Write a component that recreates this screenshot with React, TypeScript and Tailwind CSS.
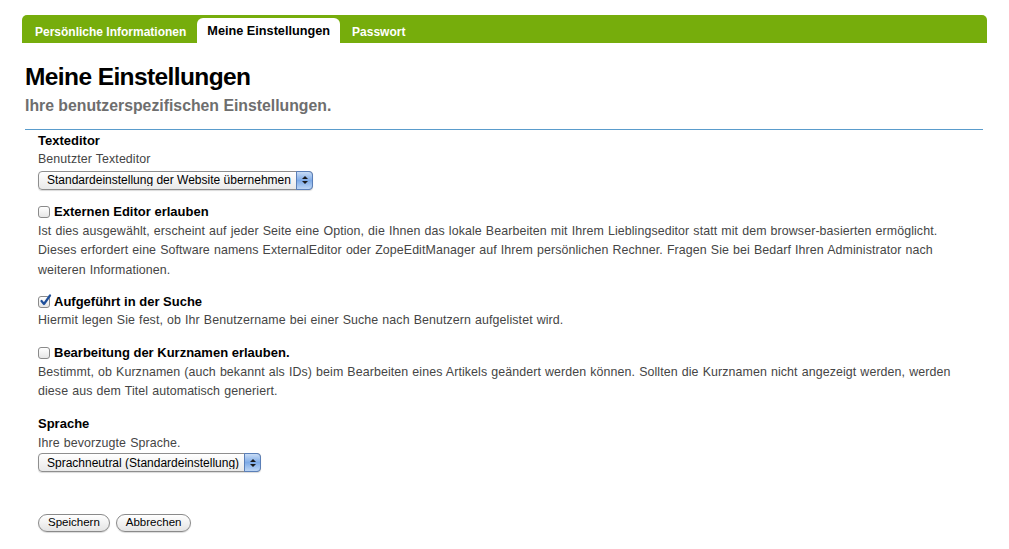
import React from 'react';

const font = { fontFamily: '"Liberation Sans", Arial, sans-serif' };

const tabs = [
  { label: 'Persönliche Informationen', active: false },
  { label: 'Meine Einstellungen', active: true },
  { label: 'Passwort', active: false },
];

const MacSelect = ({ value, width }: { value: string; width: string }) => (
  <div
    className={`flex h-[19px] ${width} items-center rounded-[4px] border border-[#8e8e8e] bg-gradient-to-b from-white to-[#e9e9e9] shadow-[0_1px_1px_rgba(0,0,0,0.15)]`}
  >
    <span className="flex-1 truncate pl-[8px] text-[12px] leading-none text-black">{value}</span>
    <span className="mr-[-1px] flex h-[19px] w-[17px] flex-col items-center justify-center gap-[2px] rounded-r-[4px] border border-[#5a7fb8] bg-gradient-to-b from-[#c8dcf5] via-[#7eaae6] to-[#bcd5f4]">
      <svg width="6" height="3" viewBox="0 0 6 3"><path d="M0 3 L3 0 L6 3 Z" fill="#1a1a1a" /></svg>
      <svg width="6" height="3" viewBox="0 0 6 3"><path d="M0 0 L3 3 L6 0 Z" fill="#1a1a1a" /></svg>
    </span>
  </div>
);

const Checkbox = ({ checked }: { checked?: boolean }) => (
  <span className="relative mr-[4px] inline-flex h-[12px] w-[12px] shrink-0 rounded-[3px] border border-[#8a8a8a] bg-gradient-to-b from-white to-[#e6e6e6]">
    {checked && (
      <svg className="absolute left-[0px] top-[-3px]" width="13" height="13" viewBox="0 0 13 13">
        <path d="M2.5 7 L5 10 L11 1.5" fill="none" stroke="#1f4f9a" strokeWidth="2.2" strokeLinecap="round" strokeLinejoin="round" />
      </svg>
    )}
  </span>
);

const Button = ({ label }: { label: string }) => (
  <button className="h-[18px] rounded-full border border-[#8a8a8a] bg-gradient-to-b from-white to-[#e4e4e4] px-[9px] text-[11.5px] leading-none text-black shadow-[0_1px_1px_rgba(0,0,0,0.15)]">
    {label}
  </button>
);

const Label = ({ children }: { children: React.ReactNode }) => (
  <div className="flex h-[19px] items-center text-[13px] font-bold text-black">{children}</div>
);

const Help = ({ children }: { children: React.ReactNode }) => (
  <div className="whitespace-nowrap text-[12.4px] leading-[19.5px] tracking-[0.1px] text-[#454545] [word-spacing:0.5px]">
    {children}
  </div>
);

export default function App() {
  return (
    <div className="min-h-[549px] w-[1009px] bg-white" style={font}>
      <div className="px-[22px] pt-[15px]">
        <div className="flex h-[28px] items-end rounded-t-[5px] bg-[#76ad0c] pl-[3px]">
          {tabs.map((t) => (
            <div
              key={t.label}
              className={
                t.active
                  ? 'ml-[1px] mr-[2px] flex h-[25px] items-center rounded-t-[6px] bg-white px-[10px] pt-[2px] text-[12.7px] font-bold text-black'
                  : 'flex h-[25px] items-center px-[10px] pt-[2px] text-[12px] font-bold text-white'
              }
            >
              {t.label}
            </div>
          ))}
        </div>

        <div className="pl-[3px] pr-[4px]">
          <h1 className="mt-[19px] text-[24.5px] font-bold leading-[30px] tracking-[-0.6px] text-black">
            Meine Einstellungen
          </h1>
          <h2 className="mt-[3px] text-[15.8px] font-bold leading-[22px] text-[#6e6e6e]">
            Ihre benutzerspezifischen Einstellungen.
          </h2>
          <div className="mt-[12px] h-px bg-[#5a9ccc]" />

          <div className="pl-[13px] pr-[10px] pt-[1px]">
            <Label>Texteditor</Label>
            <Help>Benutzter Texteditor</Help>
            <div className="mt-[1px]">
              <MacSelect value="Standardeinstellung der Website übernehmen" width="w-[275px]" />
            </div>

            <div className="mt-[13px]">
              <Label>
                <Checkbox />
                Externen Editor erlauben
              </Label>
              <Help>
                Ist dies ausgewählt, erscheint auf jeder Seite eine Option, die Ihnen das lokale Bearbeiten mit Ihrem
                Lieblingseditor statt mit dem browser-basierten ermöglicht.
                <br />
                Dieses erfordert eine Software namens ExternalEditor oder ZopeEditManager auf Ihrem persönlichen
                Rechner. Fragen Sie bei Bedarf Ihren Administrator nach
                <br />
                weiteren Informationen.
              </Help>
            </div>

            <div className="mt-[12px]">
              <Label>
                <Checkbox checked />
                Aufgeführt in der Suche
              </Label>
              <Help>Hiermit legen Sie fest, ob Ihr Benutzername bei einer Suche nach Benutzern aufgelistet wird.</Help>
            </div>

            <div className="mt-[13px]">
              <Label>
                <Checkbox />
                Bearbeitung der Kurznamen erlauben.
              </Label>
              <Help>
                Bestimmt, ob Kurznamen (auch bekannt als IDs) beim Bearbeiten eines Artikels geändert werden können.
                Sollten die Kurznamen nicht angezeigt werden, werden
                <br />
                diese aus dem Titel automatisch generiert.
              </Help>
            </div>

            <div className="mt-[13px]">
              <Label>Sprache</Label>
              <Help>Ihre bevorzugte Sprache.</Help>
              <div className="mt-[0px]">
                <MacSelect value="Sprachneutral (Standardeinstellung)" width="w-[223px]" />
              </div>
            </div>

            <div className="mt-[42px] flex gap-[6px]">
              <Button label="Speichern" />
              <Button label="Abbrechen" />
            </div>
          </div>
        </div>
      </div>
    </div>
  );
}
